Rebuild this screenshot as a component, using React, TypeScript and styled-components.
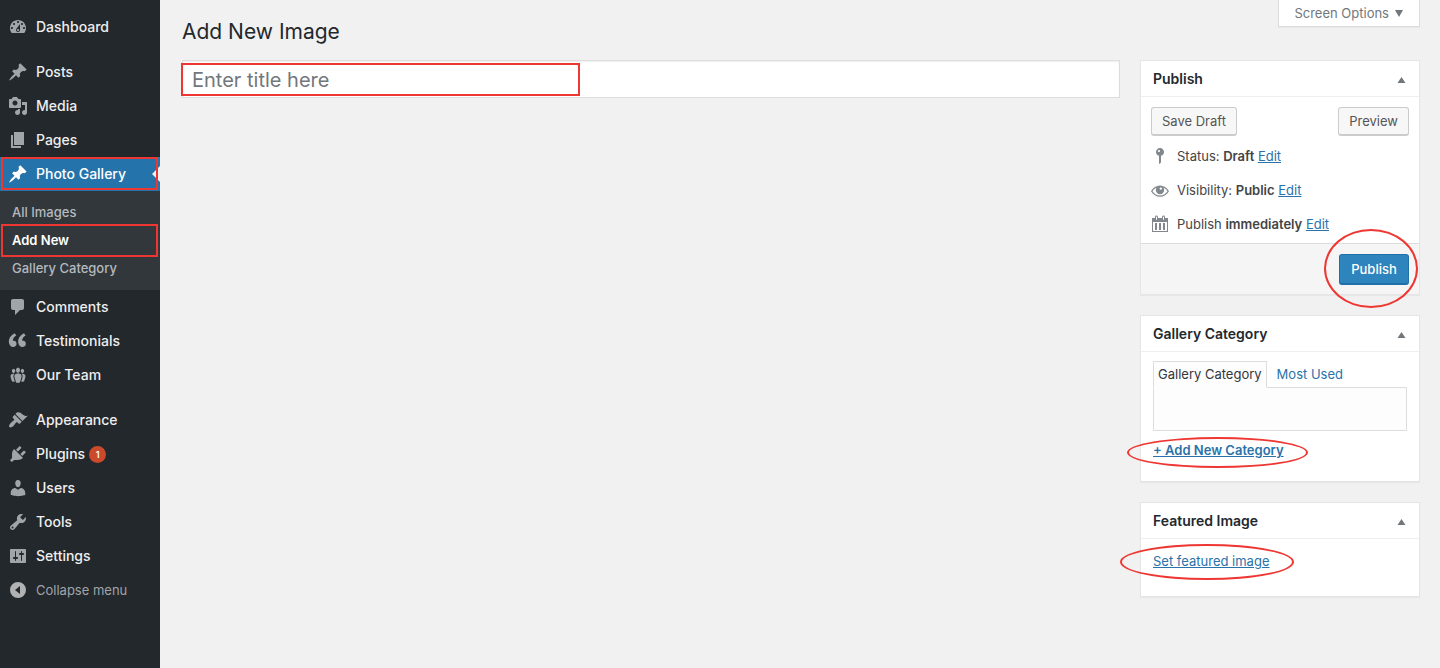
import React from "react";
import styled, { createGlobalStyle, css } from "styled-components";

const red = "#ee3733";
const link = "#2a72a9";

const GlobalStyle = createGlobalStyle`
  *, *::before, *::after { box-sizing: border-box; }
  body {
    margin: 0;
    background: #f1f1f1;
    color: #444;
    font-family: Inter, "Liberation Sans", sans-serif;
    font-size: 13px;
    line-height: 18px;
  }
  h1, h2, p, ul { margin: 0; padding: 0; }
  ul { list-style: none; }
  button, input { font-family: inherit; }
`;

const Page = styled.div`
  display: flex;
  min-height: 100vh;
`;

const Sidebar = styled.nav`
  flex: none;
  width: 160px;
  padding-top: 10px;
  background: #23282d;
`;

const MenuItem = styled.li<{ $gapBefore?: boolean }>`
  margin-top: ${(p) => (p.$gapBefore ? 11 : 0)}px;
`;

const menuRow = css`
  position: relative;
  display: flex;
  align-items: center;
  gap: 8px;
  width: 100%;
  height: 34px;
  padding: 0 8px;
  border: 0;
  font-size: 14px;
  text-decoration: none;
  white-space: nowrap;
`;

const MenuLink = styled.a<{ $current?: boolean }>`
  ${menuRow}
  background: ${(p) => (p.$current ? "#2573ab" : "transparent")};
  color: ${(p) => (p.$current ? "#fff" : "#eee")};
  font-weight: 500;

  svg { fill: ${(p) => (p.$current ? "#fff" : "#a0a5aa")}; }
`;

const CollapseButton = styled.button`
  ${menuRow}
  background: transparent;
  color: #a0a5aa;
  font-size: 13px;
  cursor: pointer;

  svg { fill: #b0b2b4; }
`;

const CurrentArrow = styled.span`
  position: absolute;
  top: 9px;
  right: 0;
  border: 8px solid transparent;
  border-left: 0;
  border-right-color: #f1f1f1;
`;

const Badge = styled.span`
  min-width: 17px;
  margin-left: -4px;
  border-radius: 9px;
  background: #ca4a2b;
  color: #fff;
  font-size: 9px;
  font-weight: 600;
  line-height: 17px;
  text-align: center;
`;

const Submenu = styled.ul`
  padding: 7px 0 8px;
  background: #32373c;
`;

const SubmenuLink = styled.a<{ $current?: boolean }>`
  position: relative;
  display: block;
  padding: 5px 12px;
  color: ${(p) => (p.$current ? "#fff" : "#b4b9be")};
  font-weight: ${(p) => (p.$current ? 600 : 500)};
  text-decoration: none;
`;

const MarkBox = styled.span`
  position: absolute;
  inset: 0 2px 1px 1px;
  border: 2px solid ${red};
  pointer-events: none;
`;

const SubmenuMark = styled(MarkBox)`
  inset: -2px 2px -3px 1px;
`;

const TitleMark = styled(MarkBox)`
  inset: 3px auto 2px -1px;
  width: 399px;
  max-width: 100%;
`;

const Content = styled.div`
  flex: 1;
  min-width: 0;
  padding: 0 20px 20px 22px;
`;

const TopBar = styled.header`
  display: flex;
  justify-content: space-between;
  align-items: flex-start;
  height: 60px;
`;

const PageTitle = styled.h1`
  padding-top: 18px;
  color: #23282d;
  font-size: 21px;
  font-weight: 400;
  line-height: 28px;
`;

const ScreenOptions = styled.button`
  display: flex;
  align-items: center;
  gap: 5px;
  height: 27px;
  padding: 0 15px;
  border: 1px solid #ddd;
  border-top: 0;
  background: #fff;
  box-shadow: 0 1px 1px rgba(0, 0, 0, 0.04);
  color: #72777c;
  font-size: 13px;
  cursor: pointer;

  svg { fill: #72777c; }
`;

const Columns = styled.div`
  display: flex;
  align-items: flex-start;
  gap: 20px;
`;

const Editor = styled.main`
  position: relative;
  flex: 1;
  min-width: 0;
`;

const TitleInput = styled.input`
  display: block;
  width: 100%;
  height: 38px;
  padding: 2px 9px 0;
  border: 1px solid #ddd;
  border-radius: 0;
  background: #fff;
  box-shadow: inset 0 1px 2px rgba(0, 0, 0, 0.07);
  color: #32373c;
  font-size: 20px;
  outline: none;

  &::placeholder { color: #72777c; opacity: 1; }
`;

const Aside = styled.aside`
  display: flex;
  flex: none;
  flex-direction: column;
  gap: 20px;
  width: 280px;
`;

const Panel = styled.section`
  border: 1px solid #e5e5e5;
  background: #fff;
  box-shadow: 0 1px 1px rgba(0, 0, 0, 0.04);
`;

const PanelHeader = styled.header`
  display: flex;
  align-items: center;
  justify-content: space-between;
  height: 36px;
  padding: 0 12px;
  border-bottom: 1px solid #eee;
`;

const PanelTitle = styled.h2`
  color: #23282d;
  font-size: 14px;
  font-weight: 600;
  line-height: 20px;
`;

const ToggleButton = styled.button`
  display: flex;
  padding: 2px 1px 0;
  border: 0;
  background: none;
  cursor: pointer;

  svg { fill: #72777c; }
`;

const PublishBody = styled.div`
  padding: 10px 10px 9px;
`;

const ButtonRow = styled.div`
  display: flex;
  justify-content: space-between;
  margin-bottom: 10px;
`;

const Button = styled.button<{ $primary?: boolean }>`
  min-width: 70px;
  height: ${(p) => (p.$primary ? 31 : 29)}px;
  padding: 0 10px;
  border: 1px solid ${(p) => (p.$primary ? "#1f6fa8" : "#ccc")};
  border-radius: 3px;
  border-bottom-width: 2px;
  background: ${(p) => (p.$primary ? "#2e84bc" : "#f7f7f7")};
  color: ${(p) => (p.$primary ? "#fff" : "#555")};
  font-size: 13px;
  font-weight: ${(p) => (p.$primary ? 500 : 400)};
  white-space: nowrap;
  cursor: pointer;
`;

const StatusList = styled.ul`
  display: flex;
  flex-direction: column;
  gap: 14px;
`;

const StatusRow = styled.li`
  display: flex;
  align-items: center;
  gap: 7px;
  height: 20px;

  svg { flex: none; margin-left: -1px; fill: #82878c; }
  b { font-weight: 600; }
`;

const TextLink = styled.a<{ $strong?: boolean }>`
  color: ${link};
  font-weight: ${(p) => (p.$strong ? 600 : 400)};
  text-decoration: underline;
`;

const PublishFooter = styled.footer`
  display: flex;
  justify-content: flex-end;
  padding: 10px 10px 9px;
  border-top: 1px solid #ddd;
  background: #f5f5f5;
`;

const Marked = styled.span`
  position: relative;
  display: inline-block;
`;

const Ellipse = styled.span<{ $inset: string }>`
  position: absolute;
  inset: ${(p) => p.$inset};
  border: 2px solid ${red};
  border-radius: 50%;
  pointer-events: none;
`;

const PanelBody = styled.div<{ $tabbed?: boolean }>`
  padding: ${(p) => (p.$tabbed ? "9px 12px 22px" : "13px 12px 26px")};
`;

const Tabs = styled.div`
  display: flex;
`;

const Tab = styled.button<{ $active?: boolean }>`
  position: relative;
  height: 27px;
  margin-bottom: -1px;
  padding: 0 ${(p) => (p.$active ? 4 : 9)}px 2px;
  border: 1px solid ${(p) => (p.$active ? "#ddd" : "transparent")};
  border-bottom-color: ${(p) => (p.$active ? "#fdfdfd" : "transparent")};
  background: ${(p) => (p.$active ? "#fdfdfd" : "transparent")};
  color: ${(p) => (p.$active ? "#32373c" : link)};
  font-size: 13px;
  white-space: nowrap;
  cursor: pointer;
`;

const TabPanel = styled.div`
  height: 44px;
  margin-bottom: 10px;
  border: 1px solid #ddd;
  background: #fdfdfd;
`;

const paths = {
  dashboard:
    "M3.76 16h12.48c1.1-1.37 1.76-3.11 1.76-5 0-4.42-3.58-8-8-8s-8 3.58-8 8c0 1.89.66 3.63 1.76 5zM10 4c.55 0 1 .45 1 1s-.45 1-1 1-1-.45-1-1 .45-1 1-1zM6 6c.55 0 1 .45 1 1s-.45 1-1 1-1-.45-1-1 .45-1 1-1zm8 0c.55 0 1 .45 1 1s-.45 1-1 1-1-.45-1-1 .45-1 1-1zm-5.37 5.55L12 7v6c0 1.1-.9 2-2 2s-2-.9-2-2c0-.57.24-1.08.63-1.45zM4 10c.55 0 1 .45 1 1s-.45 1-1 1-1-.45-1-1 .45-1 1-1zm12 0c.55 0 1 .45 1 1s-.45 1-1 1-1-.45-1-1 .45-1 1-1zm-5 3c0-.55-.45-1-1-1s-1 .45-1 1 .45 1 1 1 1-.45 1-1z",
  pin: "M10.44 3.02l1.82-1.82 6.36 6.35-1.83 1.82c-1.05-.68-2.48-.57-3.41.36l-.75.75c-.92.93-1.04 2.35-.35 3.41l-1.83 1.82-2.41-2.41-2.8 2.79c-.42.42-3.38 2.71-3.8 2.29s1.86-3.39 2.28-3.81l2.79-2.79L4.1 9.36l1.83-1.82c1.05.69 2.48.57 3.4-.36l.75-.75c.93-.92 1.05-2.35.36-3.41z",
  media:
    "M13 11V4c0-.55-.45-1-1-1h-1.67L9 1H5L3.67 3H2c-.55 0-1 .45-1 1v7c0 .55.45 1 1 1h10c.55 0 1-.45 1-1zM7 4.5c1.38 0 2.5 1.12 2.5 2.5S8.38 9.5 7 9.5 4.5 8.38 4.5 7 5.62 4.5 7 4.5zM14 6h5v10.5c0 1.38-1.12 2.5-2.5 2.5S14 17.88 14 16.5s1.12-2.5 2.5-2.5c.17 0 .34.02.5.05V9h-3V6zm-4 8.05V13h2v3.5c0 1.38-1.12 2.5-2.5 2.5S7 17.88 7 16.5 8.12 14 9.5 14c.17 0 .34.02.5.05z",
  pages: "M6 15V2h10v13H6zm-1 1h8v2H3V5h2v11z",
  comment:
    "M5 2h9c1.1 0 2 .9 2 2v7c0 1.1-.9 2-2 2h-2l-5 5v-5H5c-1.1 0-2-.9-2-2V4c0-1.1.9-2 2-2z",
  quote:
    "M8.5 12.8c0-.9-.2-1.6-.7-2.2-.7-.9-2.1-1-2.9-.8C4.6 7.9 6.2 5.4 8.3 4.4L6.7 2.2C3.5 3.7.4 7.1.9 11.5 1.3 14.2 2.9 16 5.1 16c1 0 1.8-.3 2.5-.9s.9-1.4.9-2.3zm9.3 0c0-.9-.2-1.6-.7-2.2-.7-.9-2.1-1-2.9-.8-.3-1.9 1.3-4.4 3.4-5.4L16 2.2c-3.2 1.5-6.3 4.9-5.8 9.3.4 2.7 2 4.5 4.2 4.5 1 0 1.8-.3 2.5-.9s.9-1.4.9-2.3z",
  team: "M8.03 4.46c-.29 1.28.55 3.46 1.97 3.46 1.41 0 2.25-2.18 1.96-3.46-.22-.98-1.08-1.63-1.96-1.63-.89 0-1.74.65-1.97 1.63zm-4.13.9c-.25 1.08.47 2.93 1.67 2.93s1.92-1.85 1.67-2.93c-.19-.83-.92-1.39-1.67-1.39s-1.48.56-1.67 1.39zm8.86 0c-.25 1.08.47 2.93 1.66 2.93 1.2 0 1.92-1.85 1.67-2.93-.19-.83-.92-1.39-1.67-1.39-.74 0-1.47.56-1.66 1.39zm-.59 11.43l1.25-4.3C14.2 10 12.71 8.47 10 8.47c-2.72 0-4.21 1.53-3.44 4.02l1.26 4.3C8.05 17.51 9 18 10 18c.98 0 1.94-.49 2.17-1.21zm-6.1-7.63c-.49.67-.96 1.83-.42 3.59l1.12 3.79c-.34.2-.77.31-1.2.31-.85 0-1.65-.41-1.85-1.03l-1.07-3.65c-.65-2.11.61-3.4 2.92-3.4.27 0 .54.02.79.06-.1.1-.2.22-.29.33zm8.35-.39c2.31 0 3.58 1.29 2.92 3.4l-1.07 3.65c-.2.62-1 1.03-1.85 1.03-.43 0-.86-.11-1.2-.31l1.11-3.77c.55-1.78.08-2.94-.42-3.61-.08-.11-.18-.23-.28-.33.25-.04.51-.06.79-.06z",
  appearance:
    "M14.48 11.06L7.41 3.99l1.5-1.5c.5-.56 2.3-.47 3.51.32 1.21.8 1.43 1.28 2.91 2.1 1.18.64 2.45 1.26 4.45.85zm-.71.71L6.7 4.7 4.93 6.47c-.39.39-.39 1.02 0 1.41l1.06 1.06c.39.39.39 1.03 0 1.42-.6.6-1.43 1.11-2.21 1.69-.35.26-.7.53-1.01.84C1.43 14.23.4 16.08 1.4 17.07c.99 1 2.84-.03 4.18-1.36.31-.31.58-.66.85-1.02.57-.78 1.08-1.61 1.69-2.21.39-.39 1.02-.39 1.41 0l1.06 1.06c.39.39 1.02.39 1.41 0z",
  plugins:
    "M13.11 4.36L9.87 7.6 8 5.73l3.24-3.24c.35-.34 1.05-.2 1.56.32.52.51.66 1.21.31 1.55zm-8 1.77l.91-1.12 9.01 9.01-1.19.84c-.71.71-2.63 1.16-3.82 1.16H6.14L4.9 17.26c-.59.59-1.54.59-2.12 0-.59-.58-.59-1.53 0-2.12l1.24-1.24v-3.88c0-1.13.4-3.19 1.09-3.89zm7.26 3.97l3.24-3.24c.34-.35 1.04-.21 1.55.31.52.51.66 1.21.31 1.55l-3.24 3.25z",
  users:
    "M10 9.25c-2.27 0-2.73-3.44-2.73-3.44C7 4.02 7.82 2 9.97 2c2.16 0 2.98 2.02 2.71 3.81 0 0-.41 3.44-2.68 3.44zm0 2.57L12.72 10c2.39 0 4.52 2.33 4.52 4.53v2.49s-3.65 1.13-7.24 1.13c-3.65 0-7.24-1.13-7.24-1.13v-2.49c0-2.25 1.94-4.48 4.47-4.48z",
  tools:
    "M16.68 9.77c-1.34 1.34-3.3 1.67-4.95.99l-5.41 6.52c-.99.99-2.59.99-3.58 0s-.99-2.59 0-3.57l6.52-5.42c-.68-1.65-.35-3.61.99-4.95 1.28-1.28 3.12-1.62 4.72-1.06l-2.89 2.89 2.82 2.82 2.86-2.87c.53 1.58.18 3.39-1.08 4.65zM3.81 16.21c.4.39 1.04.39 1.43 0 .4-.4.4-1.04 0-1.43-.39-.4-1.03-.4-1.43 0-.39.39-.39 1.03 0 1.43z",
  settings:
    "M18 16V4c0-.55-.45-1-1-1H3c-.55 0-1 .45-1 1v12c0 .55.45 1 1 1h14c.55 0 1-.45 1-1zM8 11h1c.55 0 1 .45 1 1s-.45 1-1 1H8v1.5c0 .28-.22.5-.5.5s-.5-.22-.5-.5V13H6c-.55 0-1-.45-1-1s.45-1 1-1h1V5.5c0-.28.22-.5.5-.5s.5.22.5.5V11zm5-2h-1c-.55 0-1-.45-1-1s.45-1 1-1h1V5.5c0-.28.22-.5.5-.5s.5.22.5.5V7h1c.55 0 1 .45 1 1s-.45 1-1 1h-1v5.5c0 .28-.22.5-.5.5s-.5-.22-.5-.5V9z",
  collapse: "M10 2a8 8 0 1 0 0 16a8 8 0 1 0 0-16zM12 6v8l-5-4z",
  status:
    "M14 6c0 1.86-1.28 3.41-3 3.86V16c0 1-2 2-2 2V9.86C7.28 9.41 6 7.86 6 6c0-2.21 1.79-4 4-4s4 1.79 4 4zM8 5c0 .55.45 1 1 1s1-.45 1-1-.45-1-1-1-1 .45-1 1z",
  eye: "M1 11.2C3 7.700 6.300 5.600 10 5.600s7 2.100 9 5.600c-2 3.500-5.300 5.500-9 5.500s-7-2-9-5.500zM2.500 11.200c1.800 2.800 4.500 4.300 7.500 4.300s5.700-1.500 7.500-4.300c-1-1.700-2.500-3-4.200-3.700.6.800.9 1.700.9 2.600a4.200 4.200 0 0 1-8.400 0c0-.9.3-1.800.9-2.600-1.700.7-3.200 2-4.200 3.700zM10.800 7.400a1.200 1.200 0 1 0 0 2.400a1.200 1.200 0 1 0 0-2.400z",
  calendar:
    "M15 4h3v14H2V4h3V3c0-.83.67-1.5 1.5-1.5S8 2.17 8 3v1h4V3c0-.83.67-1.5 1.5-1.5S15 2.17 15 3v1zM6 3v2.5c0 .28.22.5.5.5s.5-.22.5-.5V3c0-.28-.22-.5-.5-.5S6 2.72 6 3zm7 0v2.5c0 .28.22.5.5.5s.5-.22.5-.5V3c0-.28-.22-.5-.5-.5s-.5.22-.5.5zm4 14V8H3v9h14zM7 16V9H5v7h2zm4 0V9H9v7h2zm4 0V9h-2v7h2z",
};

type IconName = keyof typeof paths;

const Icon = ({ name }: { name: IconName }) => (
  <svg width="20" height="20" viewBox="0 0 20 20" aria-hidden="true">
    <path fillRule="evenodd" d={paths[name]} />
  </svg>
);

interface Entry {
  label: string;
  icon: IconName;
  gapBefore?: boolean;
  badge?: number;
  children?: string[];
}

const menu: Entry[] = [
  { label: "Dashboard", icon: "dashboard" },
  { label: "Posts", icon: "pin", gapBefore: true },
  { label: "Media", icon: "media" },
  { label: "Pages", icon: "pages" },
  { label: "Photo Gallery", icon: "pin", children: ["All Images", "Add New", "Gallery Category"] },
  { label: "Comments", icon: "comment" },
  { label: "Testimonials", icon: "quote" },
  { label: "Our Team", icon: "team" },
  { label: "Appearance", icon: "appearance", gapBefore: true },
  { label: "Plugins", icon: "plugins", badge: 1 },
  { label: "Users", icon: "users" },
  { label: "Tools", icon: "tools" },
  { label: "Settings", icon: "settings" },
];

const AdminMenu = () => (
  <Sidebar aria-label="Main menu">
    <ul>
      {menu.map((item) => (
        <MenuItem key={item.label} $gapBefore={item.gapBefore}>
          <MenuLink href="#" $current={!!item.children}>
            <Icon name={item.icon} />
            {item.label}
            {item.badge && <Badge>{item.badge}</Badge>}
            {item.children && (
              <>
                <CurrentArrow />
                <MarkBox />
              </>
            )}
          </MenuLink>
          {item.children && (
            <Submenu>
              {item.children.map((child) => (
                <li key={child}>
                  <SubmenuLink href="#" $current={child === "Add New"}>
                    {child}
                    {child === "Add New" && <SubmenuMark />}
                  </SubmenuLink>
                </li>
              ))}
            </Submenu>
          )}
        </MenuItem>
      ))}
      <MenuItem>
        <CollapseButton type="button">
          <Icon name="collapse" />
          Collapse menu
        </CollapseButton>
      </MenuItem>
    </ul>
  </Sidebar>
);

const MetaPanel = ({ title, children }: { title: string; children: React.ReactNode }) => (
  <Panel>
    <PanelHeader>
      <PanelTitle>{title}</PanelTitle>
      <ToggleButton type="button" aria-label={`Toggle panel: ${title}`}>
        <svg width="9" height="6" viewBox="0 0 9 6" aria-hidden="true">
          <path d="M4.5 0L8.5 6h-8z" />
        </svg>
      </ToggleButton>
    </PanelHeader>
    {children}
  </Panel>
);

const statuses: { icon: IconName; label: string; value: string }[] = [
  { icon: "status", label: "Status:", value: "Draft" },
  { icon: "eye", label: "Visibility:", value: "Public" },
  { icon: "calendar", label: "Publish", value: "immediately" },
];

export default function App() {
  return (
    <>
      <GlobalStyle />
      <Page>
        <AdminMenu />
        <Content>
          <TopBar>
            <PageTitle>Add New Image</PageTitle>
            <ScreenOptions type="button">
              Screen Options
              <svg width="10" height="7" viewBox="0 0 10 7" aria-hidden="true">
                <path d="M1 0h8L5 7z" />
              </svg>
            </ScreenOptions>
          </TopBar>
          <Columns>
            <Editor>
              <TitleInput type="text" aria-label="Title" placeholder="Enter title here" />
              <TitleMark />
            </Editor>
            <Aside>
              <MetaPanel title="Publish">
                <PublishBody>
                  <ButtonRow>
                    <Button type="button">Save Draft</Button>
                    <Button type="button">Preview</Button>
                  </ButtonRow>
                  <StatusList>
                    {statuses.map((s) => (
                      <StatusRow key={s.label}>
                        <Icon name={s.icon} />
                        <span>
                          {s.label} <b>{s.value}</b> <TextLink href="#">Edit</TextLink>
                        </span>
                      </StatusRow>
                    ))}
                  </StatusList>
                </PublishBody>
                <PublishFooter>
                  <Marked>
                    <Button type="submit" $primary>
                      Publish
                    </Button>
                    <Ellipse $inset="-25px -9px -23px -15px" />
                  </Marked>
                </PublishFooter>
              </MetaPanel>

              <MetaPanel title="Gallery Category">
                <PanelBody $tabbed>
                  <Tabs role="tablist">
                    <Tab type="button" role="tab" aria-selected="true" $active>
                      Gallery Category
                    </Tab>
                    <Tab type="button" role="tab" aria-selected="false">
                      Most Used
                    </Tab>
                  </Tabs>
                  <TabPanel role="tabpanel" />
                  <Marked>
                    <TextLink href="#" $strong>
                      + Add New Category
                    </TextLink>
                    <Ellipse $inset="-4px -24px -9px -26px" />
                  </Marked>
                </PanelBody>
              </MetaPanel>

              <MetaPanel title="Featured Image">
                <PanelBody>
                  <Marked>
                    <TextLink href="#">Set featured image</TextLink>
                    <Ellipse $inset="-8px -25px -10px -33px" />
                  </Marked>
                </PanelBody>
              </MetaPanel>
            </Aside>
          </Columns>
        </Content>
      </Page>
    </>
  );
}
